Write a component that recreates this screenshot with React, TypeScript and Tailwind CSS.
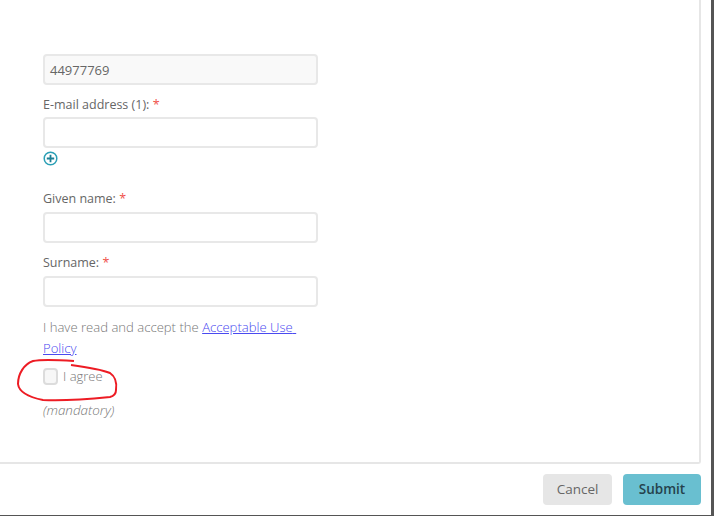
const inputClass = "block h-[31px] w-[275px] rounded-[4px] border-2 border-[#e8e8e8] px-[5px] text-[13px] text-[#666]";

const Required = ({ label }: { label: string }) => (
  <label className="block text-[12.5px] leading-[18px] text-[#666]">
    {label} <span className="text-[#f0504a]">*</span>
  </label>
);

export default function App() {
  return (
    <div className="relative flex h-[516px] w-[714px] flex-col overflow-hidden bg-white font-['Open_Sans',sans-serif]">
      <div className="flex flex-1">
        <div className="flex flex-1 flex-col">
          <div className="mr-[10px] h-[464px] rounded-br-[3px] border-r-2 border-b-2 border-[#e6e6e6] pt-[54px] pl-[43px]">
            <div className={`${inputClass} flex items-center bg-[#f9f9f9] pt-[2px]`}>44977769</div>
            <div className="mt-[11px]">
              <Required label="E-mail address (1):" />
            </div>
            <input className={`${inputClass} mt-[3px] bg-white`} />
            <svg className="mt-[3px]" width="15" height="15" viewBox="0 0 15 15" fill="none">
              <circle cx="7.5" cy="7.5" r="6.3" stroke="#2a9fb5" strokeWidth="1.5" />
              <path d="M3.8 7.5h7.4M7.5 3.8v7.4" stroke="#1d7f95" strokeWidth="1.8" />
            </svg>
            <div className="mt-[24px]">
              <Required label="Given name:" />
            </div>
            <input className={`${inputClass} mt-[4px] bg-white`} />
            <div className="mt-[11px]">
              <Required label="Surname:" />
            </div>
            <input className={`${inputClass} mt-[4px] bg-white`} />
            <p className="mt-[10px] w-[275px] text-[13.1px] leading-[21px] font-light text-[#777]">
              I have read and accept the{" "}
              <a className="text-[#4a4af0] underline">Acceptable Use{"\u00a0"}<wbr />Policy</a>
            </p>
            <div className="mt-[9px] flex items-center gap-[5px]">
              <span className="h-[17px] w-[15px] rounded-[4px] border-2 border-[#dcdcdc] bg-[#f7f7f7]" />
              <span className="text-[13px] leading-[17px] font-light text-[#777]">I agree</span>
            </div>
            <p className="mt-[16px] text-[13.4px] leading-[18px] font-light text-[#777] italic">(mandatory)</p>
          </div>
          <div className="mr-[10px] flex justify-end gap-[11px] pt-[10px]">
            <button className="h-[31px] w-[69px] rounded-[4px] bg-[#e6e6e6] text-[13.5px] text-[#666]">Cancel</button>
            <button className="h-[31px] w-[78px] rounded-[4px] bg-[#69bfd0] text-[13.5px] font-semibold text-[#25424c]">Submit</button>
          </div>
        </div>
        <div className="w-[3px] bg-[#555]" />
      </div>
      <div className="h-px bg-[#555]" />
      <svg className="pointer-events-none absolute top-0 left-0" width="714" height="516" fill="none">
        <path
          d="M74 361C60 360 42 359 33 361C24 364 18 374 18 384C19 392 28 397 43 400C62 401 90 399 110 397C114 396 116 394 116 390C117 383 116 377 110 373C100 369 86 367 71 365"
          stroke="#ed1c24"
          strokeWidth="2"
        />
      </svg>
    </div>
  );
}
